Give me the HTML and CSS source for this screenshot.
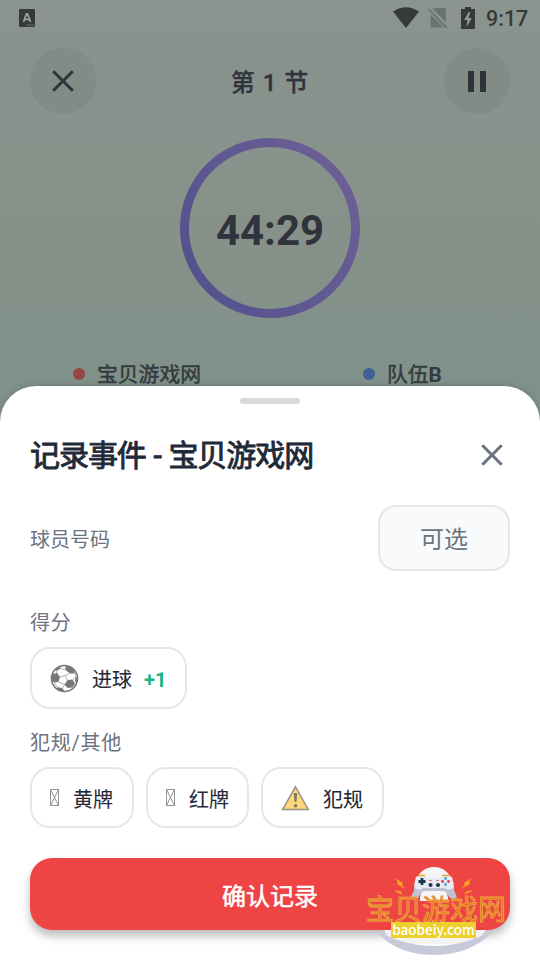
FILE: index.html
```html
<!DOCTYPE html>
<html lang="zh-CN">
<head>
<meta charset="utf-8">
<title>记录事件</title>
<link rel="stylesheet" href="styles.css">
</head>
<body>
<div class="screen">
  <header class="status">
    <svg class="status-app" width="16" height="18" viewBox="0 0 16 18"><rect width="16" height="18" rx="1" fill="#353938"/><path d="M4.5 13 7.5 4.8h1L11.5 13M5.5 10.4h5" fill="none" stroke="#9ba39d" stroke-width="1.8"/><path d="M8 16h1.5M11 16h1.3M13.5 16h1.3" stroke="#9ba39d"/></svg>
    <div class="status-right">
      <svg width="26" height="22" viewBox="0 0 26 22"><path d="M0 4.5Q13-4 26 4.5L13 21Z" fill="#353a38"/></svg>
      <svg class="sim" width="20" height="22" viewBox="0 0 20 22"><path d="M8 1h8q2 0 2 2v12.5L4.8 1.8 8 1ZM2.5 7.5 15.5 20.5H4q-1.5 0-1.5-1.5Z" fill="#697471"/><path d="m.7 2.3 18 18.5" stroke="#697471" stroke-width="1.8"/></svg>
      <svg class="battery" width="14" height="22" viewBox="0 0 14 22"><path d="M4 0h6v2h4v20H0V2h4Z" fill="#353a38"/><path d="m7.6 5-4.4 8h3.2l-.8 7 5.2-9H7.4l2-6Z" fill="#919b96"/></svg>
      <span class="clock">9:17</span>
    </div>
  </header>
  <nav class="topbar">
    <div class="round"><svg width="22" height="22" viewBox="0 0 22 22"><path d="m1.2 1.2 19.6 19.6m0-19.6L1.2 20.8" stroke="#30333c" stroke-width="3"/></svg></div>
    <h1 class="period">第 1 节</h1>
    <div class="round"><svg width="18" height="21" viewBox="0 0 18 21"><path d="M0 0h6v21H0zM12 0h6v21h-6z" fill="#30333c"/></svg></div>
  </nav>
  <section class="timer">
    <svg class="ring" width="180" height="180" viewBox="0 0 180 180"><defs><linearGradient id="g" x1="0" y1=".8" x2="1" y2=".2"><stop offset="0" stop-color="#54518e"/><stop offset="1" stop-color="#6c5f95"/></linearGradient></defs><circle cx="90" cy="90" r="85.5" fill="none" stroke="url(#g)" stroke-width="9"/></svg>
    <span class="time">44:29</span>
  </section>
  <section class="teams">
    <div class="team team-a"><i class="dot red"></i><span>宝贝游戏网</span></div>
    <div class="team team-b"><i class="dot blue"></i><span>队伍<b>B</b></span></div>
  </section>
  <main class="sheet">
    <div class="handle"></div>
    <div class="sheet-head">
      <h2>记录事件 - 宝贝游戏网</h2>
      <svg width="22" height="22" viewBox="0 0 22 22"><path d="m1.3 1.3 19.4 19.4m0-19.4L1.3 20.7" stroke="#6b7280" stroke-width="3"/></svg>
    </div>
    <div class="player"><span>球员号码</span><div class="optional">可选</div></div>
    <h3 class="label score">得分</h3>
    <div class="chips">
      <div class="chip goal">
        <svg width="29" height="29" viewBox="0 0 29 29"><circle cx="14.5" cy="14.5" r="13" fill="#fff" stroke="#777" stroke-width="1.6"/><path d="M15.5 2 20 2.5 24.5 6.5 24.5 9.5 20 9.5 15.5 6ZM2 10 7 9 10 13 8.5 18 4 18.5 1.7 16ZM17.5 16 22.5 15.500 25 19.500 22.500 23.500 17.500 24 14.500 20.500ZM7.5 23l5 1.200 2 3-3.500.3-4.500-2.600ZM5.5 5 10.500 2.200 10 5 6 7ZM25.500 12.500l2 2-.6 4-1.800-.5Z" fill="#777"/><path d="m10 4.5 5.5 1M7 9.5 6 6.8M10 13l5.200-1.500L20 9M15.200 11.500 17.500 16.500M8.500 18l6.300 2.500M7.500 23.200l-3.500-4.700M12.500 24.400l2.300-3.900M22.500 16l3.700-3-1.700-4" fill="none" stroke="#999" stroke-width=".8"/></svg>
        <span>进球</span><strong>+1</strong>
      </div>
    </div>
    <h3 class="label foul-label">犯规/其他</h3>
    <div class="chips fouls">
      <div class="chip card"><svg width="9" height="17" viewBox="0 0 9 17"><path d="M.5.5h8v16h-8ZM.5.5l8 16m0-16-8 16" fill="none" stroke="#888" stroke-width=".9"/></svg><span>黄牌</span></div>
      <div class="chip card"><svg width="9" height="17" viewBox="0 0 9 17"><path d="M.5.5h8v16h-8ZM.5.5l8 16m0-16-8 16" fill="none" stroke="#888" stroke-width=".9"/></svg><span>红牌</span></div>
      <div class="chip foul"><svg width="29" height="26" viewBox="0 0 29 26"><path d="M14.5 1.8 27.3 24.5H1.7Z" fill="#fed77b" stroke="#969184" stroke-width="1.5"/><path d="M12.8 8h3.4l-.7 9h-2Z" fill="#817962"/><circle cx="14.5" cy="20.8" r="1.8" fill="#817962"/></svg><span>犯规</span></div>
    </div>
    <div class="confirm"><span>确认记录</span></div>
  </main>
  <aside class="watermark">
    <svg class="pad" width="140" height="90" viewBox="0 0 140 90">
      <path d="M18 64H120L108 78H28Z" fill="#f3f3f7"/>
      <path d="M9 64Q38 80 68 80T128 64Q106 89 68 89T9 64Z" fill="#c8cad9"/>
      <ellipse cx="68" cy="18" rx="18" ry="17" fill="#f5f5f5"/>
      <path d="M50 11Q54 9 59 10.5L63 12H73L77 10.5Q82 9 86 11 88 17 88 23L85 26Q68 19 51 26L48 23Q48 17 50 11Z" fill="#e9ebf3"/>
      <path d="M49 22Q53 25 57 22H79Q83 25 87 22L91 31Q86 36 81 28 80 25 77 25H59Q56 25 55 28 50 36 45 31Z" fill="#bcc2d2"/>
      <path d="M54 31Q57 25 68 25T82 31V35H54Z" fill="#f5f5f5"/>
      <path d="M52 9.5h7M76 9.5h7" stroke="#e6a33e" stroke-width="1.5"/>
      <path d="M56 12v7m-3.5-3.5h7" stroke="#173b4b" stroke-width="2.8"/><circle cx="64.5" cy="19" r="2.1" fill="#203b4c"/><circle cx="72" cy="19" r="2.1" fill="#203b4c"/><circle cx="79.5" cy="12.5" r="1.4" fill="#43a4d2"/><circle cx="79.5" cy="18.5" r="1.4" fill="#43a4d2"/><circle cx="76.5" cy="15.5" r="1.4" fill="#ed3a4c"/><circle cx="82.5" cy="15.5" r="1.4" fill="#ed3a4c"/><path d="M63.5 14.5h2m5 0h2" stroke="#db425e"/>
      <path d="m29 12 8 5-1 2 3 4-8-5 1-2ZM106 12l-8 5 1 2-4 4 9-5-1-2ZM29 24l7 2-1 1 2 2-7-3ZM106 24l-7 2 1 1-3 2 8-3Z" fill="#f8a51f"/></svg>
    <div class="wm-name">宝贝游戏网</div>
    <div class="wm-site">baobeiy.com</div>
  </aside>
</div>
</body>
</html>
```
FILE: styles.css
```css
* { box-sizing: border-box; }
body { margin: 0; font-family: Roboto, "Noto Sans CJK SC", sans-serif; }
h1, h2, h3 { margin: 0; font-weight: 400; }
svg { display: block; flex: none; }
.screen { position: relative; width: 540px; height: 960px; overflow: hidden; display: flex; flex-direction: column; background: linear-gradient(#8c948f 0, #87928d 60px, #88938d 130px, #869189 220px, #80918a 386px); }
.status { height: 48px; padding: 6px 12px 0 19px; display: flex; justify-content: space-between; }
.status-app { margin-top: 3px; }
.status-right { display: flex; height: 24px; align-items: center; }
.sim { margin-left: 9px; }
.battery { margin-left: 13px; }
.clock { width: 42px; margin-left: 11px; font-size: 21.5px; font-weight: 500; line-height: 24px; color: #353a38; white-space: nowrap; padding-top: 2px; }
.topbar { height: 66px; padding: 0 30px; display: flex; align-items: center; justify-content: space-between; }
.round { width: 66px; height: 66px; border-radius: 50%; background: #828c86; display: grid; place-items: center; }
.period { font-size: 24px; line-height: 36px; padding-top: 3px; color: #30333c; font-weight: 500; letter-spacing: 1px; -webkit-text-stroke: .3px #30333c; }
.timer { width: 180px; height: 180px; margin: 24px auto 0; display: grid; place-items: center; }
.ring, .time { grid-area: 1 / 1; }
.time { font-size: 42px; line-height: 48px; color: #30333c; font-weight: 700; padding-top: 6px; }
.teams { height: 68px; padding: 41px 0 0 73px; display: flex; }
.team { display: flex; height: 30px; align-items: center; gap: 12px; font-size: 20.8px; line-height: 30px; color: #343b3e; -webkit-text-stroke: .5px #343b3e; }
.team span { padding-top: 1px; }
.team-a { width: 290px; }
.team b { -webkit-text-stroke: 0; font-weight: 700; }
.dot { width: 12px; height: 12px; border-radius: 50%; }
.red { background: #974547; }
.blue { background: #415f98; }
.sheet { height: 574px; padding: 12px 30px 0; border-radius: 36px 36px 0 0; background: #fff; box-shadow: 0 -1px 5px #4c565255; z-index: 1; }
.handle { width: 60px; height: 6px; border-radius: 3px; background: #d9d9d9; margin: 0 auto; }
.sheet-head { height: 44px; margin-top: 29px; padding-right: 7px; display: flex; align-items: center; justify-content: space-between; }
h2 { font-size: 30px; line-height: 44px; padding-top: 2px; color: #1f2937; letter-spacing: -1.05px; word-spacing: 1.3px; -webkit-text-stroke: .9px #1f2937; }
.player { height: 66px; margin-top: 28px; display: flex; align-items: center; justify-content: space-between; font-size: 20px; color: #6b7280; }
.optional { width: 132px; height: 66px; padding-top: 3px; border: 2px solid #e5e7eb; border-radius: 18px; background: #f9fafb; display: grid; place-items: center; font-size: 24px; line-height: 36px; }
.label { height: 30px; padding-top: 1px; font-size: 20px; line-height: 30px; letter-spacing: .75px; color: #6b7280; }
.score { margin-top: 36px; }
.foul-label { margin-top: 18px; }
.chips { display: flex; margin-top: 10px; height: 62px; gap: 12px; }
.chip { height: 62px; border: 2px solid #e5e7eb; border-radius: 20px; display: flex; align-items: center; padding-left: 18px; font-size: 20px; line-height: 30px; color: #1f2937; -webkit-text-stroke: .1px #1f2937; }
.chip span, .chip strong { padding-top: 3px; white-space: nowrap; }
.goal { width: 157px; }
.goal span { margin-left: 13px; }
.goal strong { margin-left: 12px; color: #1db482; -webkit-text-stroke: 0; font-weight: 700; }
.fouls, .fouls .chip { height: 61px; }
.fouls .chip span { padding-top: 4px; }
.card { width: 104px; gap: 14px; }
.card + .card { width: 103px; }
.foul { width: 123px; gap: 13px; }
.confirm { height: 72px; margin-top: 30px; border-radius: 22px; display: grid; place-items: center; background: #ef4444; color: #fff; font-size: 24px; line-height: 36px; -webkit-text-stroke: .5px #fff; box-shadow: 0 6px 10px #0004; }
.confirm span { padding-top: 5px; }
.watermark { position: absolute; left: 366px; top: 866px; width: 140px; height: 90px; z-index: 2; }
.pad { position: absolute; left: 0; top: 0; }
.wm-name { position: absolute; left: 0; top: 29px; font-size: 28px; line-height: 27px; white-space: nowrap; color: #ef711f; -webkit-text-stroke: .8px #e9aa45; font-family: "Noto Sans CJK SC", sans-serif; }
.wm-site { position: absolute; left: 25px; top: 56px; width: 85px; height: 16px; background: #ecd02b; color: #fff; font: 500 13.5px/14px "Noto Sans CJK SC", sans-serif; text-align: center; white-space: nowrap; }
```
